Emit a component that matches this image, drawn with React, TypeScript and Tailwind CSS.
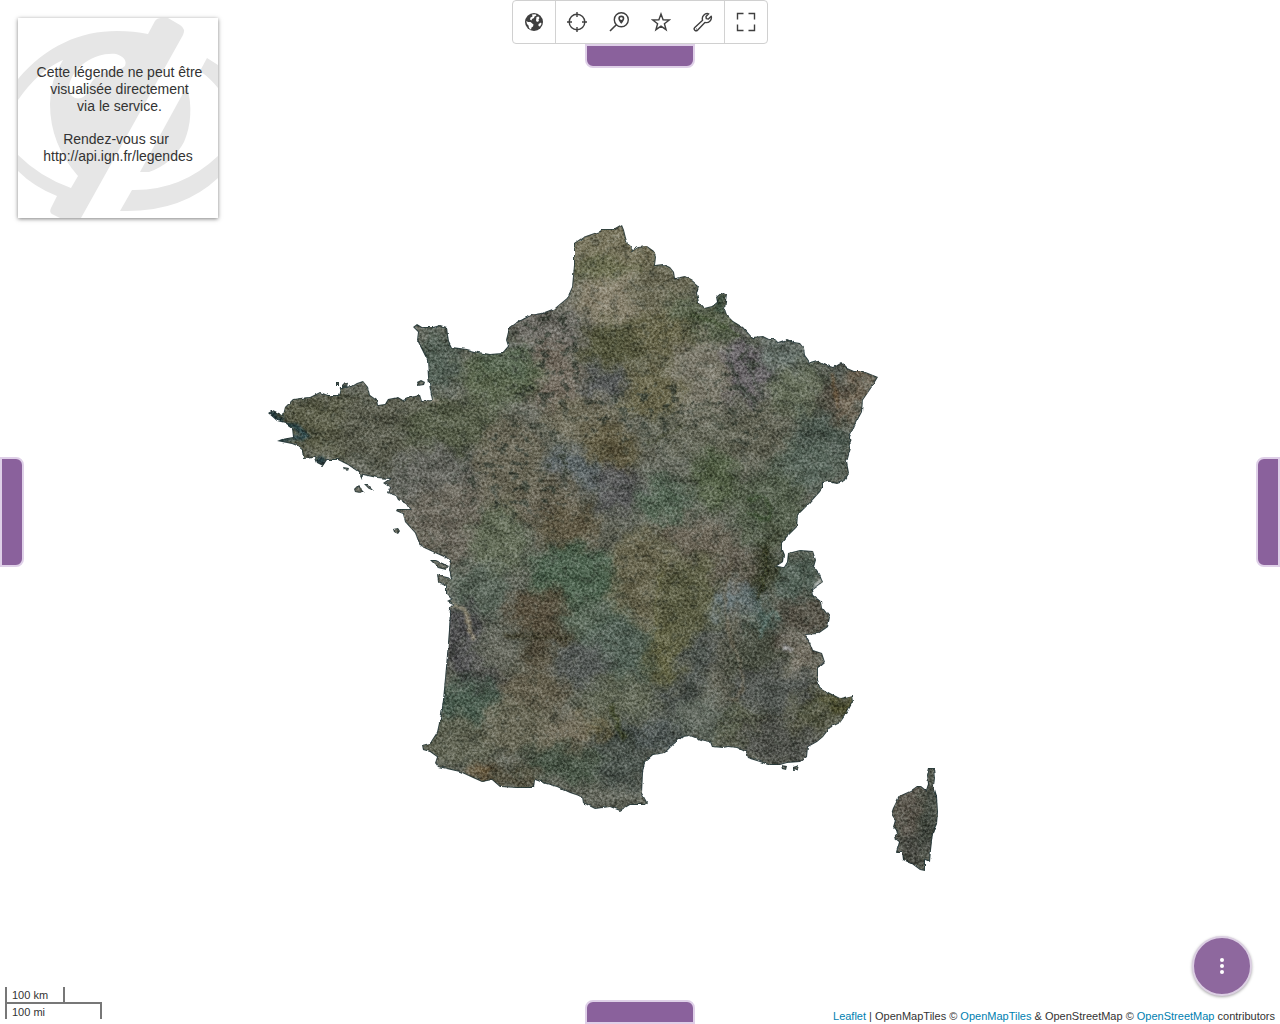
import React from 'react';

const MAINLAND =
  'M622 225L624 230L626 238L628 244L633 250L638 247L647 246L654 251L656 257L655 265L663 264L670 267L674 272L675 278L685 276L692 280L699 286L697 293L699 302L704 308L712 306L717 302L716 297L722 292L727 295L726 302L725 309L727 315L733 321L743 327L752 337L763 336L769 339L775 339L778 342L787 339L794 342L800 343L804 348L805 355L810 362L817 360L824 364L833 367L841 362L847 368L854 371L863 371L878 377L872 387L863 400L862 412L855 425L850 437L851 448L847 462L849 473L843 482L837 484L828 482L823 483L823 487L820 492L810 503L798 515L797 527L787 537L782 543L782 550L784 555L783 562L777 566L784 567L787 562L788 553L800 550L813 551L816 560L814 567L820 575L823 582L812 590L813 595L822 602L823 608L830 617L828 627L818 634L806 635L810 642L813 650L822 653L825 662L818 668L818 680L820 687L830 693L840 698L852 695L853 702L847 713L840 723L830 728L823 737L817 742L808 747L807 757L800 762L787 763L780 765L768 765L760 762L747 758L745 752L737 748L728 747L723 748L712 747L710 742L700 740L690 736L683 737L673 745L665 753L653 755L645 762L643 773L642 793L647 802L645 805L637 805L630 805L620 811L610 807L595 809L583 803L582 797L570 793L557 787L546 784L535 780L534 788L517 788L500 787L492 780L482 782L473 778L460 772L438 767L435 763L437 757L430 752L423 750L422 745L430 743L437 732L441 714L443 700L446 667L449 630L450 607L453 604L447 601L451 599L446 594L446 586L438 582L437 574L443 576L451 578L449 570L450 562L444 557L435 553L422 547L418 541L415 533L405 522L403 514L396 511L397 509L409 509L406 504L398 500L396 496L387 493L389 487L383 483L389 479L377 478L363 475L362 480L358 472L348 465L338 460L327 460L323 466L317 463L315 458L303 459L302 450L297 446L292 444L277 441L282 439L293 437L292 428L285 423L277 421L268 413L273 410L283 415L285 407L293 399L300 398L310 397L320 392L328 395L338 395L340 387L352 386L357 383L363 381L368 387L370 395L377 400L378 405L385 404L388 399L398 397L403 400L410 397L420 395L422 401L432 400L430 390L428 377L427 360L422 350L417 340L418 332L413 327L417 324L422 327L433 327L440 325L447 327L448 335L449 341L452 347L467 349L478 352L490 354L502 353L508 346L506 340L509 328L517 322L530 315L542 313L555 308L567 298L572 287L574 265L574 243L583 237L600 231L602 229L615 229Z';
const CORSICA =
  'M929 768L934 768L935 778L934 786L937 796L938 812L937 824L933 833L931 850L930 862L925 860L925 871L920 870L912 864L903 860L902 852L896 852L899 842L894 838L898 832L893 827L895 820L891 814L893 808L899 796L910 791L917 786L921 786L926 790L928 784L927 776Z';
const ISLANDS = [
  'M342 385L345 382L348 383L347 387L342 387Z', 'M417 382L421 380L425 382L424 385L418 386Z', 'M336 383L339 383L339 386L336 386Z',
  'M354 489L358 485L364 491L360 493L355 492Z', 'M364 484L368 484L374 490L369 489Z', 'M343 467L349 468L348 471L344 470Z',
  'M393 529L398 528L400 531L398 534L394 532Z', 'M430 560L436 560L449 566L446 570L438 568Z', 'M781 765L787 766L786 770L782 769Z', 'M793 767L799 765L798 769L793 770Z',
];
const LAND = MAINLAND + CORSICA + ISLANDS.join('');

type Patch = [number, number, number, number, string, number?];
const PATCHES: Patch[] = [
  [615, 250, 50, 34, '#77714f'], [612, 300, 40, 26, '#8a8063'], [665, 290, 34, 28, '#6c6a4c'], [600, 268, 40, 9, '#686d40'],
  [545, 335, 40, 30, '#67645a'], [614, 343, 34, 24, '#50532c'], [665, 335, 32, 26, '#636038'], [712, 322, 50, 16, '#52603f', 25],
  [700, 380, 34, 42, '#7c7763'], [650, 390, 34, 28, '#69653d'], [555, 380, 26, 40, '#716655'], [606, 384, 22, 18, '#55595a'],
  [748, 375, 20, 44, '#625c62', -15], [785, 355, 28, 18, '#617067'], [800, 392, 36, 28, '#5f6b4f'], [852, 395, 10, 34, '#76644a', 25],
  [826, 405, 12, 28, '#4b4638', 20], [820, 440, 32, 26, '#3f5245', 20], [800, 465, 42, 28, '#4e6253'], [437, 360, 20, 34, '#4b5f50'],
  [500, 375, 42, 30, '#53633f'], [505, 360, 30, 18, '#4d6343'], [332, 425, 62, 32, '#55583a'], [395, 430, 60, 38, '#555842'],
  [455, 425, 52, 26, '#505a3c'], [435, 480, 48, 34, '#61635a'], [460, 520, 58, 36, '#6c6656'], [510, 465, 36, 48, '#68634c'],
  [585, 420, 40, 26, '#706b50'], [608, 450, 34, 22, '#5c532f'], [573, 472, 32, 24, '#5a686b'], [617, 490, 24, 22, '#505152'],
  [500, 540, 30, 36, '#5b6a4b'], [545, 500, 38, 26, '#655e47'], [570, 528, 32, 22, '#5a5032'], [665, 505, 27, 28, '#4a654c'],
  [715, 478, 24, 34, '#4a5e38'], [755, 435, 36, 34, '#5d5f4a'], [690, 435, 44, 20, '#626650'], [770, 510, 36, 40, '#4c5c40'],
  [685, 545, 58, 26, '#6c6450'], [640, 590, 42, 62, '#63603f'], [570, 578, 44, 34, '#3f6043'], [540, 618, 32, 30, '#54482f'],
  [595, 625, 34, 26, '#506750'], [620, 655, 40, 36, '#485f50'], [695, 600, 38, 44, '#575a35'], [735, 572, 22, 26, '#5f5847'],
  [766, 570, 12, 36, '#343a20', 10], [797, 578, 25, 24, '#455c4d'], [738, 606, 28, 22, '#60757a'], [765, 630, 11, 32, '#37564a', -15],
  [805, 615, 26, 18, '#514b3c'], [800, 655, 25, 18, '#77705e'], [775, 642, 14, 16, '#4d4537'], [480, 590, 30, 28, '#506251'],
  [465, 645, 20, 46, '#454548', -10], [500, 682, 34, 16, '#434242', 20], [468, 704, 38, 24, '#3d5945'], [505, 650, 34, 24, '#5f6354'],
  [552, 652, 30, 24, '#4f4730'], [580, 665, 30, 26, '#4f5753'], [535, 690, 36, 24, '#635c43'], [460, 742, 42, 22, '#5b6047'],
  [520, 728, 38, 26, '#66644b'], [575, 738, 34, 24, '#736a50'], [600, 718, 16, 18, '#6b6034'], [620, 700, 44, 24, '#5a624a'],
  [575, 765, 56, 17, '#3d513b', 8], [625, 770, 28, 20, '#424f46'], [482, 775, 16, 9, '#6c5025'], [517, 778, 24, 12, '#4a452c'],
  [632, 737, 46, 13, '#3b473e', -15], [660, 735, 30, 16, '#465350'], [690, 670, 19, 52, '#454f48', 35], [665, 655, 18, 36, '#5b5d33'],
  [730, 650, 14, 50, '#60604e', 15], [755, 665, 30, 34, '#434a38'], [775, 700, 46, 32, '#505651'], [735, 725, 38, 20, '#555c41'],
  [785, 740, 46, 24, '#484a43'], [700, 718, 28, 20, '#596557'], [835, 703, 26, 12, '#464717', 10], [812, 715, 26, 16, '#4f5336'],
  [835, 370, 18, 8, '#424c42', 15], [915, 812, 20, 32, '#574f42'], [930, 820, 10, 46, '#3c4639'], [913, 848, 16, 18, '#3f4037'],
];

const STREAKS: [string, string, number][] = [
  ['M450 605Q466 606 468 620T473 640', '#a59b82', 4], ['M560 349Q530 343 508 346', '#8d918b', 2], ['M430 400L438 400', '#a39c8b', 3],
  ['M655 418Q682 402 700 409T726 430', '#555a4b', 2], ['M695 372Q712 385 711 410', '#555a4b', 2], ['M727 350Q736 385 756 405', '#414740', 3],
  ['M745 345Q748 370 764 400', '#414740', 3], ['M645 445Q672 432 685 425', '#4b4f37', 2], ['M760 640Q770 600 780 620', '#58726a', 3],
  ['M723 618Q738 612 754 619', '#838b7d', 2], ['M733 560Q716 600 735 650T727 700', '#6c6655', 3], ['M748 500Q765 490 770 508T748 512', '#35482c', 3],
  ['M765 546Q770 570 758 600', '#252a15', 3], ['M690 315Q722 322 740 337', '#3c4e2e', 3], ['M783 648L792 651', '#a8a8aa', 5],
  ['M813 588L822 578', '#d5dad8', 3], ['M832 373L838 408', '#6f5a3c', 3], ['M612 705Q618 730 625 738', '#3a4220', 5],
  ['M505 635L570 638', '#3f3e2c', 4], ['M670 555Q650 590 658 635T670 680', '#686844', 2], ['M718 725Q760 712 800 720', '#3d4034', 3],
  ['M286 426Q297 424 306 436L294 437', '#17343c', 6], ['M268 412L283 421', '#17343c', 5], ['M317 460L326 462', '#17343c', 7], ['M277 441L292 439', '#17343c', 4],
  ['M722 295L718 312', '#2f4233', 7],
];

function MapImage() {
  return (
    <svg viewBox="0 0 1280 1024" preserveAspectRatio="xMidYMid slice" className="absolute inset-0 h-full w-full" role="img" aria-label="Photographies aériennes de la France">
      <defs>
        <filter id="coast" x="260" y="215" width="700" height="670" filterUnits="userSpaceOnUse">
          <feTurbulence type="fractalNoise" baseFrequency="0.16" numOctaves="2" seed="4" result="n" />
          <feDisplacementMap in="SourceGraphic" in2="n" scale="3" xChannelSelector="R" yChannelSelector="G" />
        </filter>
        <filter id="fields" x="240" y="200" width="740" height="700" filterUnits="userSpaceOnUse" colorInterpolationFilters="sRGB">
          <feGaussianBlur in="SourceGraphic" stdDeviation="6" result="b" />
          <feTurbulence type="fractalNoise" baseFrequency="0.06" numOctaves="4" seed="9" result="n" />
          <feDisplacementMap in="b" in2="n" scale="26" xChannelSelector="R" yChannelSelector="G" />
          <feColorMatrix type="saturate" values="0.7" />
        </filter>
        <filter id="streaks" x="240" y="200" width="740" height="700" filterUnits="userSpaceOnUse">
          <feTurbulence type="fractalNoise" baseFrequency="0.12" numOctaves="3" seed="2" result="n" />
          <feDisplacementMap in="SourceGraphic" in2="n" scale="7" xChannelSelector="R" yChannelSelector="G" />
          <feGaussianBlur stdDeviation="0.8" />
        </filter>
        <filter id="grain" x="240" y="200" width="740" height="700" filterUnits="userSpaceOnUse" colorInterpolationFilters="sRGB">
          <feTurbulence type="fractalNoise" baseFrequency="0.4" numOctaves="3" seed="7" />
          <feColorMatrix values="1.6 0 0 0 -0.25  1.6 0 0 0 -0.25  1.6 0 0 0 -0.25  0 0 0 0 1" />
        </filter>
        <filter id="relief" x="240" y="200" width="740" height="700" filterUnits="userSpaceOnUse" colorInterpolationFilters="sRGB">
          <feTurbulence type="fractalNoise" baseFrequency="0.05 0.07" numOctaves="5" seed="21" />
          <feColorMatrix values="0 2 0 0 -0.45  0 2 0 0 -0.45  0 2 0 0 -0.45  0 0 0 0 1" />
        </filter>
        <filter id="woods" x="240" y="200" width="740" height="700" filterUnits="userSpaceOnUse" colorInterpolationFilters="sRGB">
          <feTurbulence type="fractalNoise" baseFrequency="0.1 0.13" numOctaves="5" seed="33" />
          <feColorMatrix values="0 0 0 0 0.21  0 0 0 0 0.24  0 0 0 0 0.2  5 0 0 0 -2.6" />
        </filter>
        <mask id="land" maskUnits="userSpaceOnUse" x="240" y="200" width="740" height="700">
          <path d={LAND} fill="#fff" filter="url(#coast)" />
        </mask>
        <mask id="wooded" maskUnits="userSpaceOnUse" x="240" y="200" width="740" height="700">
          <rect x="240" y="200" width="740" height="700" fill="#555" />
          <g fill="#ccc" filter="url(#fields)">
            <ellipse cx="550" cy="360" rx="38" ry="60" />
            <ellipse cx="520" cy="470" rx="60" ry="50" />
            <ellipse cx="745" cy="390" rx="30" ry="60" />
            <ellipse cx="640" cy="410" rx="60" ry="30" />
          </g>
        </mask>
      </defs>
      <g mask="url(#land)">
        <rect x="240" y="200" width="740" height="700" fill="#62655a" />
        <g filter="url(#fields)" opacity="0.95">
          {PATCHES.map(([cx, cy, rx, ry, fill, turn = 0], i) => (
            <ellipse key={i} cx={cx} cy={cy} rx={rx} ry={ry} fill={fill} transform={`rotate(${turn} ${cx} ${cy})`} />
          ))}
        </g>
        <g mask="url(#wooded)">
          <rect x="240" y="200" width="740" height="700" filter="url(#woods)" />
        </g>
        <g fill="none" filter="url(#streaks)" opacity="0.75">
          {STREAKS.map(([d, stroke, w], i) => (
            <path key={i} d={d} stroke={stroke} strokeWidth={w} />
          ))}
        </g>
        <rect x="240" y="200" width="740" height="700" filter="url(#relief)" className="mix-blend-soft-light" opacity="0.25" />
        <rect x="240" y="200" width="740" height="700" filter="url(#grain)" className="mix-blend-soft-light" opacity="0.65" />
        <path d={LAND} fill="none" stroke="#1d3036" strokeWidth="2" opacity="0.7" filter="url(#coast)" />
      </g>
    </svg>
  );
}

function Legend() {
  return (
    <figure className="absolute top-[18px] left-[18px] h-[200px] w-[200px] bg-white shadow-[0_1px_4px_rgba(0,0,0,0.5)]">
      <svg viewBox="0 0 200 200" className="absolute inset-0 h-full w-full" fill="#e6e6e6" aria-hidden="true">
        <path d="M0 61C28 28 62 13 99 13Q116 13 130 16L137 3Q139 0 143 0H150L162 7Q168 11 165 17L63 200H42L34 196Q31 194 33 190L39 178Q16 169 0 153V137Q22 159 53 170L60 158Q32 126 32 86Q32 62 45 42Q20 53 0 82Z" />
        <path d="M51 68C55 47 79 34 98 36Q110 40 107 48Q103 52 92 52Q73 57 69 75Q65 82 57 80Q50 77 51 68Z" fill="#fff" />
        <path d="M169 68Q177 98 166 124Q154 146 131 154L122 154Z" />
        <path d="M189 40L200 47V70Q192 60 182 53Z" />
        <path d="M114 172Q163 173 200 138V160Q163 195 102 193Z" />
      </svg>
      <figcaption className="relative pt-[46px] text-center font-['Liberation_Sans',Arial,sans-serif] text-[14px] leading-[17px] text-[#333]">
        <p className="pl-[3px]">Cette légende ne peut être<br />visualisée directement<br />via le service.</p>
        <p className="mt-4">Rendez-vous sur&nbsp;<br />http://api.ign.fr/legendes</p>
      </figcaption>
    </figure>
  );
}

function Icon({ children }: { children: React.ReactNode }) {
  return (
    <svg viewBox="0 0 20 20" className="h-5 w-5" fill="none" stroke="currentColor" strokeWidth="1.4" aria-hidden="true">
      {children}
    </svg>
  );
}

function ToolButton({ label, children }: { label: string; children: React.ReactNode }) {
  return (
    <button type="button" aria-label={label} title={label} className="flex h-[42px] w-[42px] items-center justify-center hover:bg-gray-100">
      {children}
    </button>
  );
}

function Toolbar() {
  return (
    <div role="toolbar" aria-label="Outils" className="flex divide-x divide-[#d2d2d2] rounded-[4px] border border-[#d0d0d0] bg-white text-[#3f3f3f]">
      <div className="flex">
        <ToolButton label="Fonds de carte">
          <Icon>
            <circle cx="10" cy="10" r="9" fill="currentColor" stroke="none" />
            <path d="M2.300 9L4 10L6.500 10L9.500 12.500L9 14.500L7.500 15.500L7 17.800L5 16L4.500 13.500L3 12ZM8 2.500L11.500 2.300L12.500 3.500L10.500 4.500L10 6L8 7L7.500 8.500L6 7.500L6.500 5.500L8.500 4.500ZM12.500 5L14.500 4.500L15.500 6L14.500 7.500L15 9L13 10L12 8.500ZM14.500 12L17 10.500L17.500 12L16 14.500L14.500 14Z" fill="#fff" stroke="none" />
          </Icon>
        </ToolButton>
      </div>
      <div className="flex">
        <ToolButton label="Me localiser">
          <Icon>
            <circle cx="10" cy="10" r="7.800" />
            <path d="M10 0V5M10 15V20M0 10H5M15 10H20" />
          </Icon>
        </ToolButton>
        <ToolButton label="Rechercher un lieu">
          <Icon>
            <circle cx="12.300" cy="7.700" r="7" />
            <path d="M7.300 12.700L1 19" strokeWidth="1.600" />
            <path d="M12.300 3.500A3 3 0 0 0 9.300 6.600C9.300 8.500 12.300 12 12.300 12S15.300 8.500 15.300 6.600A3 3 0 0 0 12.300 3.500ZM12.300 5.200A1.400 1.400 0 1 1 12.300 8A1.400 1.400 0 1 1 12.300 5.200Z" fill="currentColor" fillRule="evenodd" stroke="none" />
          </Icon>
        </ToolButton>
        <ToolButton label="Favoris">
          <Icon>
            <path d="M10 2L12.100 7.800L18.300 8L13.400 11.800L15.100 17.700L10 14.200L4.900 17.700L6.600 11.800L1.700 8L7.900 7.800Z" />
          </Icon>
        </ToolButton>
        <ToolButton label="Outils">
          <Icon>
            <path d="M15.700 1.800A5 5 0 0 0 9.600 8.200L1.800 15.500A1.900 1.900 0 0 0 4.500 18.200L11.900 10.400A5 5 0 0 0 18.200 4.300L15.400 7L13.300 6.600L13 4.600Z" strokeLinejoin="round" />
            <path d="M3 17H3.600" />
          </Icon>
        </ToolButton>
      </div>
      <div className="flex">
        <ToolButton label="Plein écran">
          <Icon>
            <path d="M1.500 7.500V1.500H7.500M12.500 1.500H18.500V7.500M18.500 12.500V18.500H12.500M7.500 18.500H1.500V12.500" />
          </Icon>
        </ToolButton>
      </div>
    </div>
  );
}

function Attribution() {
  const link = 'text-[#0080b0] hover:underline';
  return (
    <footer className="absolute right-0 bottom-0 bg-white/70 px-[5px] text-[11px] leading-4 text-[#333]">
      <a href="#leaflet" className={link}>Leaflet</a> | OpenMapTiles © <a href="#openmaptiles" className={link}>OpenMapTiles</a> &amp; OpenStreetMap © <a href="#openstreetmap" className={link}>OpenStreetMap</a> contributors
    </footer>
  );
}

export default function App() {
  return (
    <main className="relative h-screen w-full overflow-hidden bg-white font-['Liberation_Sans',Arial,sans-serif]">
      <MapImage />
      <Legend />
      <div className="absolute inset-x-0 top-0 flex flex-col items-center">
        <Toolbar />
        <button type="button" aria-label="Ouvrir le panneau supérieur" className="h-6 w-[110px] rounded-b-lg border-2 border-[#dfd0e8] bg-[#8a619c]" />
      </div>
      <div className="absolute inset-y-0 left-0 flex items-center">
        <button type="button" aria-label="Ouvrir le panneau gauche" className="h-[110px] w-6 rounded-r-lg border-2 border-[#dfd0e8] bg-[#8a619c]" />
      </div>
      <div className="absolute inset-y-0 right-0 flex items-center">
        <button type="button" aria-label="Ouvrir le panneau droit" className="h-[110px] w-6 rounded-l-lg border-2 border-[#dfd0e8] bg-[#8a619c]" />
      </div>
      <div className="absolute inset-x-0 bottom-0 flex justify-center">
        <button type="button" aria-label="Ouvrir le panneau inférieur" className="h-6 w-[110px] rounded-t-lg border-2 border-[#dfd0e8] bg-[#8a619c]" />
      </div>
      <div className="absolute bottom-[5px] left-[5px] text-[11px] leading-3 text-[#333]">
        <div className="h-[17px] w-[60px] border-2 border-t-0 border-[#777] bg-white/50 px-[5px] pt-[2px]">100 km</div>
        <div className="-mt-[2px] h-[17px] w-[97px] border-2 border-b-0 border-[#777] bg-white/50 px-[5px] pt-[2px]">100 mi</div>
      </div>
      <button type="button" aria-label="Menu" className="absolute right-7 bottom-7 flex h-[60px] w-[60px] flex-col items-center justify-center gap-[2px] rounded-full border-2 border-[#dccfe3] bg-[#8e689e] shadow-[0_1px_3px_rgba(0,0,0,0.35)]">
        <span className="h-1 w-1 rounded-full bg-white" />
        <span className="h-1 w-1 rounded-full bg-white" />
        <span className="h-1 w-1 rounded-full bg-white" />
      </button>
      <Attribution />
    </main>
  );
}
